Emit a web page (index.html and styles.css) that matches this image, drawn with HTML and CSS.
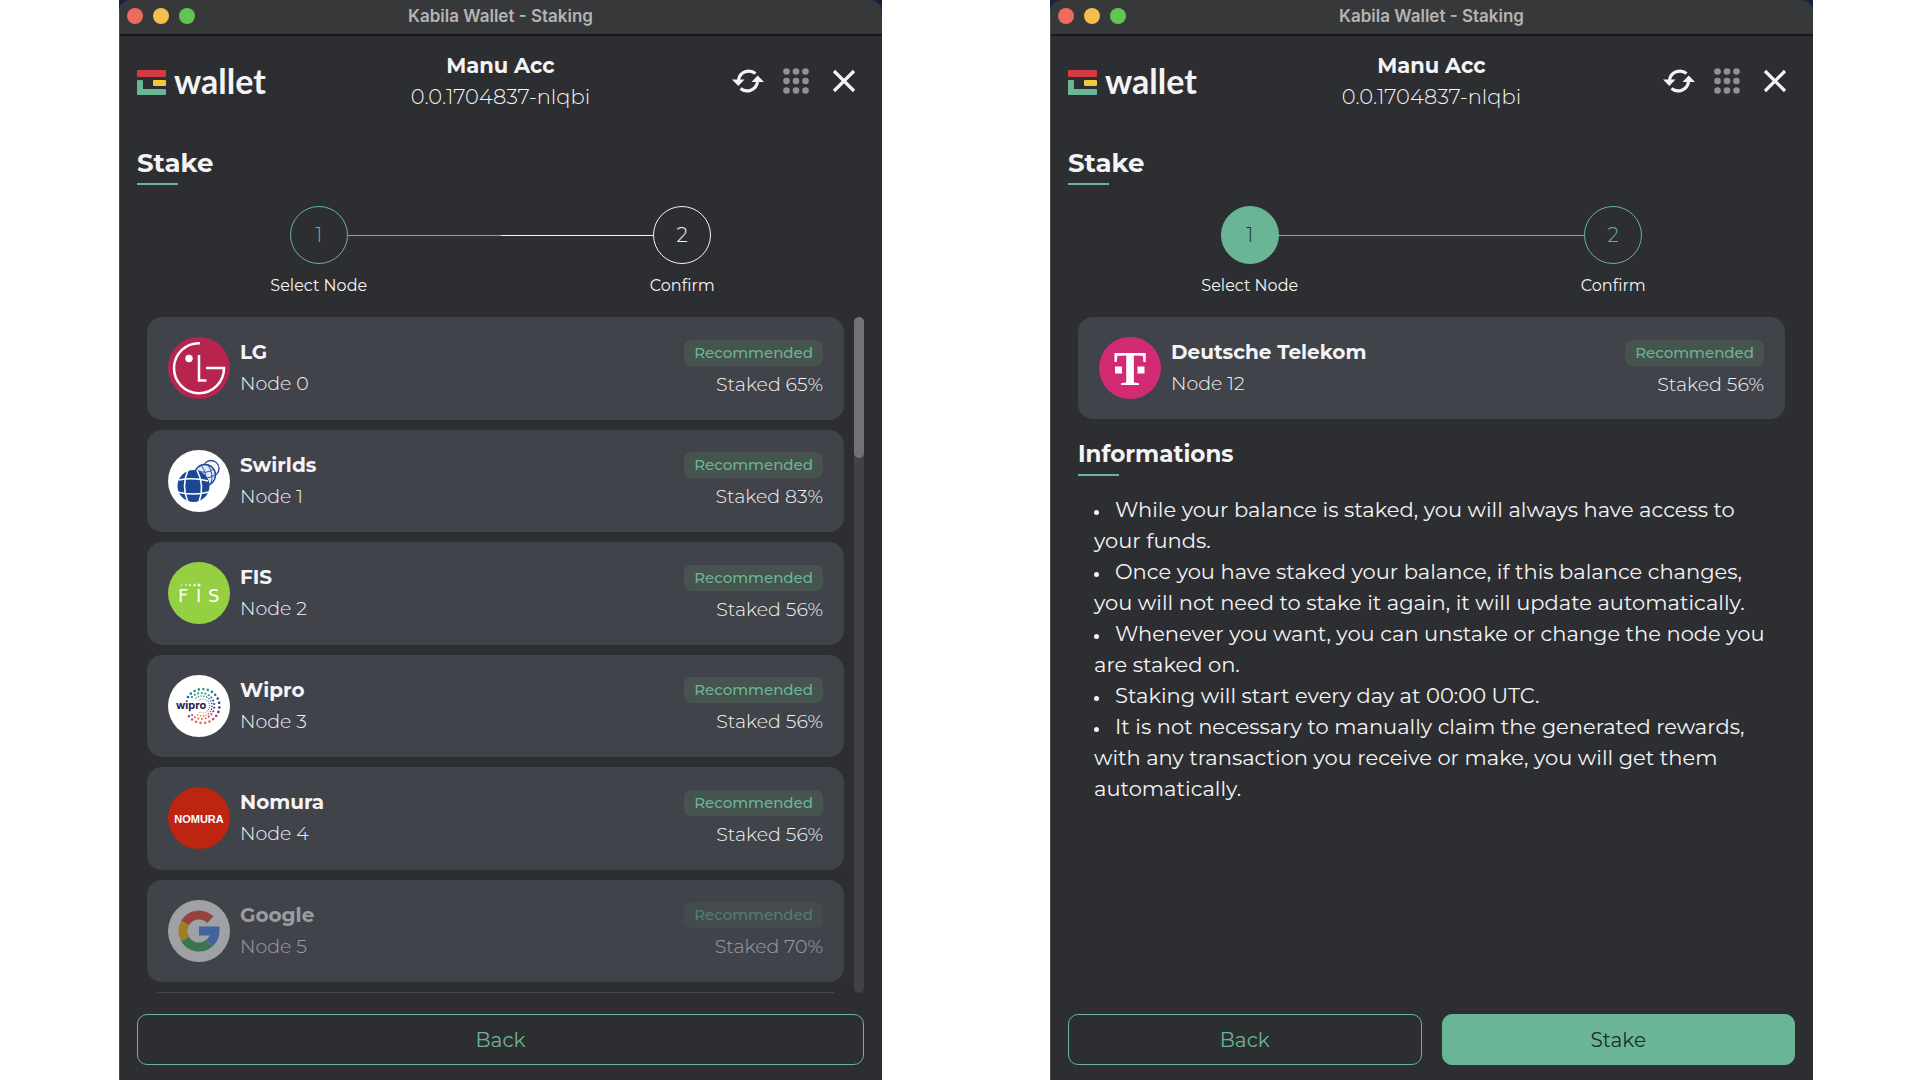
FILE: index.html
```html
<!DOCTYPE html>
<html lang="en">
<head>
    <meta charset="UTF-8">
    <meta name="viewport" content="width=device-width, initial-scale=1.0">
    <title>Kabila Wallet - Staking</title>
    <link rel="stylesheet" href="styles.css">
</head>
<body>
    <!-- Shared icons -->
    <svg class="sprite" aria-hidden="true">
        <symbol id="logo-mark" viewBox="0 0 29 25">
            <rect width="29" height="7" rx="1" fill="#d23c40"/>
            <rect x="16" y="10" width="13" height="6" rx="1" fill="#f0c83a"/>
            <path d="M1 10h4q1 0 1 1v8h22q1 0 1 1v4q0 1-1 1H1q-1 0-1-1V11q0-1 1-1z" fill="#69b595"/>
        </symbol>
        <symbol id="icon-refresh" viewBox="0 0 32 26">
            <path d="M23.500 5.500A10.500 10.500 0 0 0 6.500 12M8.500 20.500A10.500 10.500 0 0 0 25.500 14" fill="none" stroke="#f4f4f5" stroke-width="3.200"/>
            <path d="M0 11.500H12.500L6.300 18zM19.500 14H32L25.700 7.500z" fill="#f4f4f5"/>
        </symbol>
        <symbol id="icon-apps" viewBox="0 0 26 26">
            <g fill="#919194">
                <circle cx="3.500" cy="3.500" r="3.300"/><circle cx="13" cy="3.500" r="3.300"/><circle cx="22.500" cy="3.500" r="3.300"/>
                <circle cx="3.500" cy="13" r="3.300"/><circle cx="13" cy="13" r="3.300"/><circle cx="22.500" cy="13" r="3.300"/>
                <circle cx="3.500" cy="22.500" r="3.300"/><circle cx="13" cy="22.500" r="3.300"/><circle cx="22.500" cy="22.500" r="3.300"/>
            </g>
        </symbol>
        <symbol id="icon-close" viewBox="0 0 24 24">
            <path d="M2 2L22 22M22 2L2 22" stroke="#f4f4f5" stroke-width="3.200"/>
        </symbol>
    </svg>

    <main class="desktop">
        <!-- Step 1: pick a node -->
        <section class="frame">
            <div class="window">
                <div class="titlebar">
                    <div class="lights"><span class="light red"></span><span class="light yellow"></span><span class="light green"></span></div>
                    <div class="titlebar-text">Kabila Wallet - Staking</div>
                </div>
                <header class="header">
                    <div class="brand">
                        <svg class="brand-mark"><use href="#logo-mark"/></svg>
                        <span class="brand-name">wallet</span>
                    </div>
                    <div class="account">
                        <div class="account-name">Manu Acc</div>
                        <div class="account-id">0.0.1704837-nlqbi</div>
                    </div>
                    <div class="actions">
                        <button class="icon-btn" aria-label="Refresh"><svg width="32" height="26"><use href="#icon-refresh"/></svg></button>
                        <button class="icon-btn" aria-label="Apps"><svg width="26" height="26"><use href="#icon-apps"/></svg></button>
                        <button class="icon-btn" aria-label="Close"><svg width="24" height="24"><use href="#icon-close"/></svg></button>
                    </div>
                </header>
                <div class="content">
                    <h1 class="title">Stake</h1>
                    <div class="steps">
                        <div class="step active">
                            <span></span><span class="circle">1</span><span class="line"></span>
                            <span class="step-label">Select Node</span>
                        </div>
                        <div class="step">
                            <span class="line"></span><span class="circle">2</span><span></span>
                            <span class="step-label">Confirm</span>
                        </div>
                    </div>
                    <div class="node-area">
                        <ul class="node-list">
                            <li class="card">
                                <svg class="node-logo" viewBox="0 0 62 62">
                                    <circle cx="31" cy="31" r="31" fill="#b7254f"/>
                                    <path d="M32 6.200A25 25 0 1 0 56 31H38M31 18V43.500H38.500" fill="none" stroke="#fff" stroke-width="2.500"/>
                                    <circle cx="21" cy="21.500" r="3.700" fill="#fff"/>
                                </svg>
                                <div class="node-text"><strong>LG</strong><span>Node 0</span></div>
                                <div class="node-stats"><span class="chip">Recommended</span><span class="staked">Staked 65%</span></div>
                            </li>
                            <li class="card">
                                <svg class="node-logo" viewBox="0 0 62 62">
                                    <circle cx="31" cy="31" r="31" fill="#fff"/>
                                    <circle cx="43" cy="18.500" r="8" fill="#fff" stroke="#1c4795" stroke-width="1.300"/>
                                    <circle cx="37" cy="25" r="10.500" fill="#dfe8f5" stroke="#1c4795" stroke-width="1.400"/>
                                    <path d="M29 20q8 5 17-1M27 26q10 5 20-1M33 15q7 9 4 20M40 15q6 9 3 18" fill="none" stroke="#1c4795" stroke-width="0.900"/>
                                    <circle cx="25.500" cy="36" r="16" fill="#1c4795"/>
                                    <path d="M11 30q14-3 29 1M9 42q16 4 32 0M20 20q-7 16 0 32M29 20q8 16 2 32" fill="none" stroke="#fff" stroke-width="1.600"/>
                                </svg>
                                <div class="node-text"><strong>Swirlds</strong><span>Node 1</span></div>
                                <div class="node-stats"><span class="chip">Recommended</span><span class="staked">Staked 83%</span></div>
                            </li>
                            <li class="card">
                                <svg class="node-logo" viewBox="0 0 62 62">
                                    <circle cx="31" cy="31" r="31" fill="#95d042"/>
                                    <g fill="#fff">
                                        <circle cx="13.500" cy="23" r="1.200" opacity=".3"/><circle cx="18" cy="23" r="1.200" opacity=".5"/>
                                        <circle cx="22" cy="23" r="1.200" opacity=".7"/><circle cx="26.500" cy="23" r="1.300" opacity=".9"/><circle cx="31" cy="23" r="1.500"/>
                                        <text class="fis" x="10 28 40" y="40">FIS</text>
                                    </g>
                                </svg>
                                <div class="node-text"><strong>FIS</strong><span>Node 2</span></div>
                                <div class="node-stats"><span class="chip">Recommended</span><span class="staked">Staked 56%</span></div>
                            </li>
                            <li class="card">
                                <svg class="node-logo" viewBox="0 0 62 62">
                                    <defs>
                                        <linearGradient id="wipro" x1="0" y1="0" x2="0" y2="1">
                                            <stop offset="0" stop-color="#2f9a8c"/><stop offset=".25" stop-color="#2455a4"/>
                                            <stop offset=".55" stop-color="#3a2b83"/><stop offset=".8" stop-color="#b03a7c"/><stop offset="1" stop-color="#e5763f"/>
                                        </linearGradient>
                                    </defs>
                                    <circle cx="31" cy="31" r="31" fill="#fff"/>
                                    <g fill="none" stroke="url(#wipro)" stroke-linecap="round">
                                        <path d="M20 22A17 17 0 1 1 20 40" stroke-width="2.600" stroke-dasharray="0 4.500"/>
                                        <path d="M24 22A13 13 0 1 1 24 40" stroke-width="2.100" stroke-dasharray="0 3.600"/>
                                        <path d="M28 23A10 10 0 1 1 28 39" stroke-width="1.600" stroke-dasharray="0 2.800"/>
                                        <path d="M31 25A7 7 0 1 1 31 37" stroke-width="1" stroke-dasharray="0 2"/>
                                    </g>
                                    <text class="wipro" x="8" y="34">wipro</text>
                                </svg>
                                <div class="node-text"><strong>Wipro</strong><span>Node 3</span></div>
                                <div class="node-stats"><span class="chip">Recommended</span><span class="staked">Staked 56%</span></div>
                            </li>
                            <li class="card">
                                <svg class="node-logo" viewBox="0 0 62 62">
                                    <circle cx="31" cy="31" r="31" fill="#bd2411"/>
                                    <text class="nomura" x="31" y="36" text-anchor="middle">NOMURA</text>
                                </svg>
                                <div class="node-text"><strong>Nomura</strong><span>Node 4</span></div>
                                <div class="node-stats"><span class="chip">Recommended</span><span class="staked">Staked 56%</span></div>
                            </li>
                            <li class="card disabled">
                                <svg class="node-logo" viewBox="0 0 62 62">
                                    <circle cx="31" cy="31" r="31" fill="#fff"/>
                                    <g fill="none" stroke-width="9">
                                        <path d="M42.300 19.700A16 16 0 0 0 17.100 23" stroke="#ea4335"/>
                                        <path d="M17.100 23A16 16 0 0 0 17.100 39" stroke="#fbbc05"/>
                                        <path d="M17.100 39A16 16 0 0 0 41.300 43.300" stroke="#34a853"/>
                                        <path d="M41.300 43.300A16 16 0 0 0 47 31H31" stroke="#4285f4"/>
                                    </g>
                                </svg>
                                <div class="node-text"><strong>Google</strong><span>Node 5</span></div>
                                <div class="node-stats"><span class="chip">Recommended</span><span class="staked">Staked 70%</span></div>
                            </li>
                            <li class="card-edge"></li>
                        </ul>
                        <div class="scrollbar"><div class="thumb"></div></div>
                    </div>
                    <div class="footer">
                        <button class="btn">Back</button>
                    </div>
                </div>
            </div>
        </section>

        <!-- Step 2: confirm -->
        <section class="frame">
            <div class="window">
                <div class="titlebar">
                    <div class="lights"><span class="light red"></span><span class="light yellow"></span><span class="light green"></span></div>
                    <div class="titlebar-text">Kabila Wallet - Staking</div>
                </div>
                <header class="header">
                    <div class="brand">
                        <svg class="brand-mark"><use href="#logo-mark"/></svg>
                        <span class="brand-name">wallet</span>
                    </div>
                    <div class="account">
                        <div class="account-name">Manu Acc</div>
                        <div class="account-id">0.0.1704837-nlqbi</div>
                    </div>
                    <div class="actions">
                        <button class="icon-btn" aria-label="Refresh"><svg width="32" height="26"><use href="#icon-refresh"/></svg></button>
                        <button class="icon-btn" aria-label="Apps"><svg width="26" height="26"><use href="#icon-apps"/></svg></button>
                        <button class="icon-btn" aria-label="Close"><svg width="24" height="24"><use href="#icon-close"/></svg></button>
                    </div>
                </header>
                <div class="content">
                    <h1 class="title">Stake</h1>
                    <div class="steps">
                        <div class="step active done">
                            <span></span><span class="circle">1</span><span class="line"></span>
                            <span class="step-label">Select Node</span>
                        </div>
                        <div class="step active">
                            <span class="line"></span><span class="circle">2</span><span></span>
                            <span class="step-label">Confirm</span>
                        </div>
                    </div>
                    <div class="confirm">
                        <div class="card">
                            <svg class="node-logo" viewBox="0 0 62 62">
                                <circle cx="31" cy="31" r="31" fill="#d32a74"/>
                                <g fill="#fff">
                                    <text class="telekom" x="31" y="48" text-anchor="middle">T</text>
                                    <rect x="16" y="29.500" width="7" height="7"/><rect x="38.500" y="29.500" width="7" height="7"/>
                                </g>
                            </svg>
                            <div class="node-text"><strong>Deutsche Telekom</strong><span>Node 12</span></div>
                            <div class="node-stats"><span class="chip">Recommended</span><span class="staked">Staked 56%</span></div>
                        </div>
                        <h2 class="title small">Informations</h2>
                        <ul class="info">
                            <li>While your balance is staked, you will always have access to your funds.</li>
                            <li>Once you have staked your balance, if this balance changes, you will not need to stake it again, it will update automatically.</li>
                            <li>Whenever you want, you can unstake or change the node you are staked on.</li>
                            <li>Staking will start every day at 00:00 UTC.</li>
                            <li>It is not necessary to manually claim the generated rewards, with any transaction you receive or make, you will get them automatically.</li>
                        </ul>
                    </div>
                    <div class="footer">
                        <button class="btn">Back</button>
                        <button class="btn primary">Stake</button>
                    </div>
                </div>
            </div>
        </section>
    </main>
</body>
</html>
```
FILE: styles.css
```css
* {
    box-sizing: border-box;
}
body {
    margin: 0;
    background: #fff;
    color: #f4f4f5;
    font-family: Montserrat, Inter, sans-serif;
    font-size: 20px;
}
ul, h1, h2 {
    margin: 0;
    padding: 0;
}
button {
    font: inherit;
    cursor: pointer;
}
.sprite {
    display: none;
}
.desktop {
    display: grid;
    grid-template-columns: 1fr 1fr;
    gap: 168px;
    min-height: 100vh;
    padding: 0 107px 0 119px;
}
.frame {
    display: flex;
    background: #14233f;
}
.window {
    flex: 1;
    display: flex;
    flex-direction: column;
    background: #2d2e32;
    border-left: 1px solid #4b4c4f;
    border-radius: 12px 12px 0 0;
    overflow: hidden;
}

/* title bar */
.titlebar {
    display: grid;
    grid-template-columns: 1fr auto 1fr;
    align-items: center;
    height: 36px;
    padding: 0 8px 2px 7px;
    background: #373839;
    border-bottom: 2px solid #161718;
}
.lights {
    display: flex;
    gap: 10px;
}
.light {
    width: 16px;
    height: 16px;
    border-radius: 50%;
}
.light.red { background: #ed6a5e; }
.light.yellow { background: #f5bf4f; }
.light.green { background: #61c554; }
.titlebar-text {
    font-family: Inter, sans-serif;
    font-size: 17px;
    font-weight: 600;
    color: #b4b4b5;
}

/* header */
.header {
    display: grid;
    grid-template-columns: 1fr auto 1fr;
    align-items: center;
    height: 91px;
    padding: 0 18px 2px 17px;
}
.brand {
    display: flex;
    align-items: center;
    gap: 8px;
}
.brand-mark {
    width: 29px;
    height: 25px;
    margin-top: 3px;
}
.brand-name {
    font-family: Lato, sans-serif;
    font-size: 34px;
    font-weight: 700;
    line-height: 30px;
}
.account {
    text-align: center;
    font-size: 21px;
    line-height: 31px;
}
.account-name {
    font-weight: 700;
}
.account-id {
    font-weight: 300;
}
.actions {
    display: flex;
    justify-content: flex-end;
    margin-right: -4px;
}
.icon-btn {
    display: flex;
    align-items: center;
    justify-content: center;
    width: 48px;
    height: 48px;
    padding: 0;
    border: 0;
    background: none;
}

.content {
    flex: 1;
    display: flex;
    flex-direction: column;
    padding: 20px 18px 15px 17px;
}
.title {
    font-size: 26px;
    font-weight: 700;
    line-height: 32px;
}
.title::after {
    content: "";
    display: block;
    width: 41px;
    height: 2px;
    margin-top: 4px;
    background: #69b595;
}
.title.small {
    margin-top: 19px;
    font-size: 23px;
}

/* steps */
.steps {
    display: grid;
    grid-template-columns: 1fr 1fr;
    margin: 21px 0 19px;
}
.step {
    display: grid;
    grid-template-columns: 1fr 58px 1fr;
    align-items: center;
    row-gap: 10px;
}
.circle {
    display: flex;
    align-items: center;
    justify-content: center;
    height: 58px;
    border: 1px solid #f4f4f5;
    border-radius: 50%;
    font-weight: 300;
}
.line {
    height: 1px;
    background: #f4f4f5;
}
.step.active .circle {
    border-color: #69b595;
    color: #69b595;
}
.step.active .line {
    background: #69b595;
}
.step.done .circle {
    background: #69b595;
    color: #2d2e32;
}
.step-label {
    grid-column: 1 / -1;
    text-align: center;
    font-size: 16px;
    line-height: 24px;
}

/* node cards */
.node-area {
    flex: 1;
    display: flex;
    gap: 10px;
    padding-left: 10px;
}
.node-list {
    flex: 1;
    display: grid;
    grid-template-rows: repeat(6, 1fr) 1px;
    gap: 10px;
    list-style: none;
}
.card {
    display: flex;
    align-items: center;
    gap: 10px;
    min-height: 102px;
    padding: 19px 21px;
    background: #41434b;
    border-radius: 15px;
}
.card-edge {
    margin: 0 10px;
    background: #46484f;
}
.node-logo {
    width: 62px;
    height: 62px;
}
.node-text,
.node-stats {
    display: flex;
    flex-direction: column;
    line-height: 31px;
    font-size: 19px;
    font-weight: 300;
}
.node-text {
    flex: 1;
}
.node-text strong {
    font-size: 20px;
    font-weight: 700;
}
.node-stats {
    align-items: flex-end;
}
.chip {
    margin: 3px 0;
    padding: 0 10px;
    border-radius: 7px;
    background: #46534f;
    color: #69b595;
    font-size: 15px;
    font-weight: 500;
    line-height: 26px;
}
.card.disabled > * {
    opacity: .5;
}
.scrollbar {
    width: 10px;
    border-radius: 5px;
    background: #414247;
}
.thumb {
    height: 141px;
    border-radius: 5px;
    background: #717278;
}

/* text inside the node logos */
.fis {
    font: 400 18px "DejaVu Sans", sans-serif;
}
.wipro {
    font: 700 11px Inter, sans-serif;
    fill: #231a4c;
}
.nomura {
    font: 700 11px "Liberation Sans", sans-serif;
    fill: #fff;
}
.telekom {
    font: 700 49px "Liberation Serif", serif;
}

/* confirm step */
.confirm {
    flex: 1;
    padding: 0 10px;
}
.info {
    margin-top: 18px;
    padding: 0 8px 0 16px;
    list-style: none;
    font-size: 21px;
    line-height: 31px;
}
.info li::before {
    content: "";
    display: inline-block;
    width: 5px;
    height: 5px;
    margin: 0 16px 2px 0;
    border-radius: 50%;
    background: #f4f4f5;
}

.footer {
    display: flex;
    gap: 20px;
    margin-top: 21px;
}
.btn {
    flex: 1;
    height: 51px;
    border: 1px solid #69b595;
    border-radius: 10px;
    background: none;
    color: #69b595;
}
.btn.primary {
    background: #69b595;
    color: #1f2d29;
}
```
